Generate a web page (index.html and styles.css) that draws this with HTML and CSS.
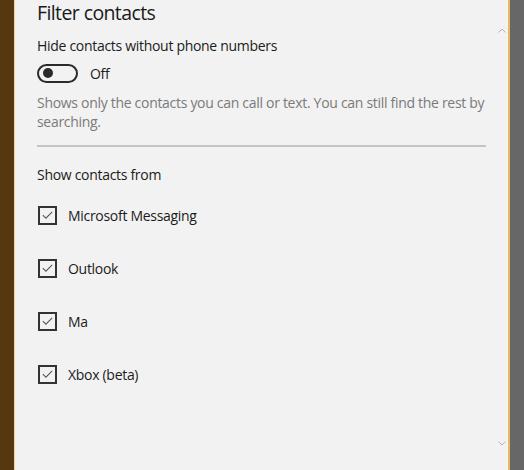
FILE: index.html
```html
<!DOCTYPE html>
<html lang="en">
<head>
<meta charset="utf-8">
<title>Filter contacts</title>
<link rel="stylesheet" href="styles.css">
</head>
<body>
<div class="frame">
  <div class="edge-left"></div>
  <div class="panel">
    <div class="content">
      <h1 class="title">Filter contacts</h1>
      <div class="label">Hide contacts without phone numbers</div>
      <div class="toggle-row">
        <span class="toggle"><span class="thumb"></span></span>
        <span class="toggle-text">Off</span>
      </div>
      <p class="desc">Shows only the contacts you can call or text. You can still find the rest by searching.</p>
      <div class="divider"></div>
      <div class="section">Show contacts from</div>
      <ul class="list">
        <li class="item"><span class="check"><svg viewBox="0 0 16 16" width="16" height="16"><path d="M3 8.2 L6.3 11.4 L13 4.6" fill="none" stroke="#555" stroke-width="1.1"/></svg></span>Microsoft Messaging</li>
        <li class="item"><span class="check"><svg viewBox="0 0 16 16" width="16" height="16"><path d="M3 8.2 L6.3 11.4 L13 4.6" fill="none" stroke="#555" stroke-width="1.1"/></svg></span>Outlook</li>
        <li class="item"><span class="check"><svg viewBox="0 0 16 16" width="16" height="16"><path d="M3 8.2 L6.3 11.4 L13 4.6" fill="none" stroke="#555" stroke-width="1.1"/></svg></span>Ma</li>
        <li class="item"><span class="check"><svg viewBox="0 0 16 16" width="16" height="16"><path d="M3 8.2 L6.3 11.4 L13 4.6" fill="none" stroke="#555" stroke-width="1.1"/></svg></span>Xbox (beta)</li>
      </ul>
    </div>
    <div class="scrollbar">
      <svg class="arrow up" viewBox="0 0 8 5" width="8" height="5"><path d="M0.5 4.5 L4 1 L7.5 4.5" fill="none" stroke="#b5b5b5" stroke-width="1"/></svg>
      <svg class="arrow down" viewBox="0 0 8 5" width="8" height="5"><path d="M0.5 0.5 L4 4 L7.5 0.5" fill="none" stroke="#b5b5b5" stroke-width="1"/></svg>
    </div>
  </div>
  <div class="edge-right"></div>
</div>
</body>
</html>
```

FILE: styles.css
```css
html, body {
  margin: 0;
  padding: 0;
  height: 100%;
}
body {
  font-family: "Open Sans", "Noto Sans", sans-serif;
  color: #1b1b1b;
  overflow: hidden;
  letter-spacing: -0.3px;
}
.frame {
  display: flex;
  height: 470px;
  width: 524px;
}
.edge-left {
  width: 14px;
  background: #553810;
  border-right: 1px solid #f3d59a;
}
.edge-right {
  width: 14px;
  background: #676767;
  border-left: 2px solid #e9b865;
}
.panel {
  flex: 1;
  display: flex;
  background: #f2f2f2;
}
.content {
  flex: 1;
  padding: 0 0 0 22px;
}
.title {
  margin: -1px 0 0;
  font-size: 19.5px;
  line-height: 28px;
  font-weight: 400;
  letter-spacing: -0.6px;
  color: #1a1a1a;
}
.label {
  margin-top: 9px;
  font-size: 14px;
  line-height: 20px;
}
.toggle-row {
  margin-top: 7px;
  display: flex;
  align-items: center;
  height: 20px;
}
.toggle {
  box-sizing: border-box;
  width: 41px;
  height: 19px;
  border: 2px solid #2a2a2a;
  border-radius: 10px;
  display: flex;
  align-items: center;
  padding-left: 4px;
}
.thumb {
  width: 10px;
  height: 10px;
  border-radius: 50%;
  background: #2a2a2a;
}
.toggle-text {
  margin-left: 12px;
  font-size: 14px;
}
.desc {
  margin: 10px 0 0;
  width: 455px;
  font-size: 14px;
  line-height: 19px;
  color: #7a7a7a;
}
.divider {
  margin-top: 14px;
  width: 449px;
  height: 2px;
  background: #c4c4c4;
}
.section {
  margin-top: 18px;
  font-size: 14px;
  line-height: 20px;
}
.list {
  list-style: none;
  margin: 20px 0 0;
  padding: 0;
  display: flex;
  flex-direction: column;
  gap: 33px;
}
.item {
  display: flex;
  align-items: center;
  height: 20px;
  font-size: 14px;
}
.check {
  box-sizing: border-box;
  width: 19px;
  height: 19px;
  border: 2px solid #333;
  margin-left: 1px;
  margin-right: 11px;
  display: flex;
  align-items: center;
  justify-content: center;
}
.scrollbar {
  width: 12px;
  display: flex;
  flex-direction: column;
  justify-content: space-between;
  align-items: center;
  padding: 28px 0 24px;
  box-sizing: border-box;
}
```
